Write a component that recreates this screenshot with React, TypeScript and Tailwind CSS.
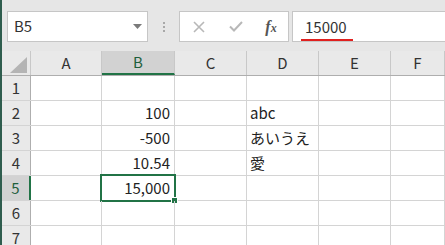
import React from 'react';

const cols = ['A', 'B', 'C', 'D', 'E', 'F'];
const colWidths = ['w-[71px]', 'w-[73px]', 'w-[72px]', 'w-[72px]', 'w-[72px]', 'flex-1'];

const data: Record<string, { v: string; align: 'l' | 'r' }> = {
    B2: { v: '100', align: 'r' },
    B3: { v: '-500', align: 'r' },
    B4: { v: '10.54', align: 'r' },
    B5: { v: '15,000', align: 'r' },
    D2: { v: 'abc', align: 'l' },
    D3: { v: 'あいうえ', align: 'l' },
    D4: { v: '愛', align: 'l' },
};

const font = { fontFamily: '"Noto Sans CJK JP", "Noto Sans", sans-serif' };

const App: React.FC = () => {
    return (
        <div className="w-[445px] h-[245px] overflow-hidden flex bg-white" style={font}>
            {/* window edge */}
            <div className="w-[2px] h-full bg-[#2f5d4e] shrink-0" />

            <div className="flex-1 flex flex-col min-w-0">
                {/* formula bar */}
                <div className="h-[51px] bg-[#e6e6e6] flex items-start pt-[11px] pl-[5px] shrink-0">
                    <div className="w-[141px] h-[31px] bg-white border border-[#c6c6c6] flex items-center pl-[6px] pr-[5px]">
                        <span className="text-[15px] text-[#333] flex-1">B5</span>
                        <svg width="9" height="5" viewBox="0 0 9 5">
                            <path d="M0 0 L9 0 L4.5 5 Z" fill="#7a7a7a" />
                        </svg>
                    </div>
                    <div className="w-[31px] h-[31px] flex flex-col items-center justify-center gap-[2px]">
                        <div className="w-[2px] h-[2px] bg-[#a8a8a8]" />
                        <div className="w-[2px] h-[2px] bg-[#a8a8a8]" />
                        <div className="w-[2px] h-[2px] bg-[#a8a8a8]" />
                    </div>
                    <div className="w-[110px] h-[31px] bg-white border border-[#c6c6c6] flex items-center">
                        <div className="w-[37px] flex justify-center">
                            <svg width="12" height="12" viewBox="0 0 12 12">
                                <path d="M1 1 L11 11 M11 1 L1 11" stroke="#b8b8b8" strokeWidth="1.6" />
                            </svg>
                        </div>
                        <div className="w-[37px] flex justify-center">
                            <svg width="14" height="11" viewBox="0 0 14 11">
                                <path d="M1 5.5 L5 9.5 L13 1" stroke="#b8b8b8" strokeWidth="2" fill="none" />
                            </svg>
                        </div>
                        <div className="w-[34px] flex justify-center">
                            <span className="text-[16px] italic font-bold text-[#555] leading-none" style={{ fontFamily: '"Liberation Serif", serif' }}>
                                f<span className="text-[12px]">x</span>
                            </span>
                        </div>
                    </div>
                    <div className="ml-[3px] flex-1 h-[31px] bg-white border border-[#c6c6c6] border-r-0 flex items-center pl-[12px]">
                        <span className="text-[15px] text-[#333] relative leading-none">
                            15000
                            <span className="absolute left-[-4px] right-[-6px] bottom-[-7px] h-[2px] bg-[#e0201f]" />
                        </span>
                    </div>
                </div>

                {/* column headers */}
                <div className="h-[25px] flex bg-[#e9e9e9] border-b border-[#aeaeae] shrink-0">
                    <div className="w-[29px] h-full relative border-r border-[#c8c8c8]">
                        <svg className="absolute left-[8px] top-[6px]" width="17" height="16" viewBox="0 0 17 16">
                            <path d="M17 0 L17 16 L0 16 Z" fill="#b4b4b4" />
                        </svg>
                    </div>
                    {cols.map((c, i) => (
                        <div
                            key={c}
                            className={`${colWidths[i]} h-full flex items-center justify-center text-[15px] border-r border-[#c8c8c8] ${
                                c === 'B' ? 'bg-[#d2d2d2] text-[#1f5f3c] border-b-2 border-b-[#217346]' : 'text-[#333]'
                            }`}
                        >
                            {c}
                        </div>
                    ))}
                </div>

                {/* rows */}
                {[1, 2, 3, 4, 5, 6, 7].map((r) => (
                    <div key={r} className="h-[25px] flex border-b border-[#d4d4d4] shrink-0">
                        <div
                            className={`w-[29px] h-full flex items-center justify-center text-[15px] border-r ${
                                r === 5
                                    ? 'bg-[#d2d2d2] text-[#1f5f3c] border-r-2 border-r-[#217346]'
                                    : 'bg-[#e9e9e9] text-[#333] border-[#aeaeae]'
                            }`}
                        >
                            {r}
                        </div>
                        {cols.map((c, i) => {
                            const cell = data[`${c}${r}`];
                            const selected = c === 'B' && r === 5;
                            return (
                                <div
                                    key={c}
                                    className={`${colWidths[i]} h-full relative flex items-center border-r border-[#d4d4d4] text-[15px] text-[#222] ${
                                        cell?.align === 'r' ? 'justify-end pr-[4px]' : 'justify-start pl-[3px]'
                                    }`}
                                >
                                    {cell?.v}
                                    {selected && (
                                        <>
                                            <div className="absolute left-[-2px] top-[-2px] right-[-2px] bottom-[-2px] border-2 border-[#217346]" />
                                            <div className="absolute right-[-4px] bottom-[-4px] w-[7px] h-[7px] bg-[#217346] border border-white" />
                                        </>
                                    )}
                                </div>
                            );
                        })}
                    </div>
                ))}
            </div>
        </div>
    );
};

export default App;
